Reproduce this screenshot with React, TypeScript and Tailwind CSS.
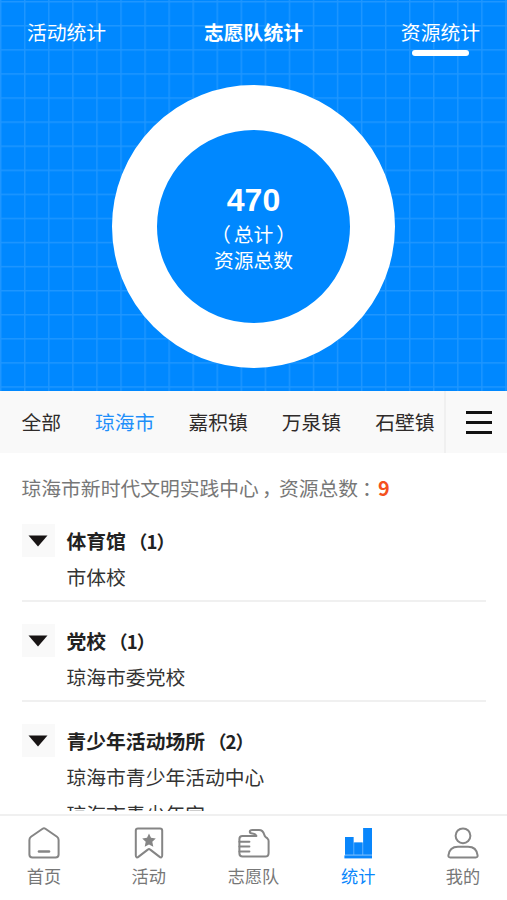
import clsx from "clsx"

type ResourceGroup = {
  name: string
  count: number
  places: string[]
}

const STAT_TABS = [
  { label: "活动统计", bold: false, active: false },
  { label: "志愿队统计", bold: true, active: false },
  { label: "资源统计", bold: false, active: true },
]

const TOWNS = ["全部", "琼海市", "嘉积镇", "万泉镇", "石壁镇"]

const GROUPS: ResourceGroup[] = [
  { name: "体育馆", count: 1, places: ["市体校"] },
  { name: "党校", count: 1, places: ["琼海市委党校"] },
  { name: "青少年活动场所", count: 2, places: ["琼海市青少年活动中心", "琼海市青少年宫"] },
]

function GridBackground() {
  return (
    <svg className="absolute inset-0 size-full" aria-hidden="true">
      <defs>
        <pattern id="grid" x="0" y="1" width="24.06" height="24.08" patternUnits="userSpaceOnUse">
          <path d="M0 0.7H24.1M0.7 0V24.1" stroke="#fff" strokeOpacity="0.12" strokeWidth="1.4" fill="none" />
        </pattern>
      </defs>
      <rect width="100%" height="100%" fill="url(#grid)" />
    </svg>
  )
}

function StatsHeader() {
  return (
    <header className="relative h-[391px] shrink-0 overflow-hidden bg-[#0088ff] text-white">
      <GridBackground />
      <div className="relative flex flex-col">
        <div className="flex h-[85px] items-start justify-between px-[27px] pt-[18px]">
          {STAT_TABS.map((tab) => (
            <div key={tab.label} className="flex flex-col items-center">
              <span className={clsx("leading-[28px]", tab.bold && "font-bold")}>{tab.label}</span>
              {tab.active && <span className="mt-[4px] h-[6px] w-[57px] rounded-full bg-white" />}
            </div>
          ))}
        </div>
        <div className="mx-auto flex size-[283px] flex-col items-center justify-center rounded-full border-[45.5px] border-white bg-[#0088ff]">
          <p className="font-['Liberation_Sans',sans-serif] text-[32px] leading-[36px] font-bold">470</p>
          <p className="mt-[3px] flex gap-[3px] leading-[26px] whitespace-nowrap">
            <span>（</span>
            <span>总计</span>
            <span>）</span>
          </p>
          <p className="leading-[25px]">资源总数</p>
        </div>
      </div>
    </header>
  )
}

function TownBar() {
  return (
    <div className="flex h-[62px] shrink-0 bg-[#f9f9f9]">
      <div className="flex flex-1 items-center gap-[34px] overflow-hidden pl-[21.5px] whitespace-nowrap">
        {TOWNS.map((town) => (
          <span key={town} className={town === "琼海市" ? "text-[#1f8ffa]" : "text-[#2f2b2a]"}>
            {town}
          </span>
        ))}
      </div>
      <button className="flex w-[63px] flex-col items-center justify-center gap-[7px] border-l-2 border-[#f0f0f0] pl-[5px]">
        <span className="h-[3px] w-[26px] bg-[#111]" />
        <span className="h-[3px] w-[26px] bg-[#111]" />
        <span className="h-[3px] w-[26px] bg-[#111]" />
      </button>
    </div>
  )
}

function GroupItem({ group }: { group: ResourceGroup }) {
  return (
    <li className="mb-[22px] flex gap-[12px] border-b-2 border-[#f0f0f0] pb-[6px]">
      <span className="flex size-[33px] shrink-0 items-center justify-center bg-[#f9f9f9]">
        <svg width="20" height="12" viewBox="0 0 20 12">
          <path d="M0.5 0.5H19.5L10 11.5Z" fill="#181414" />
        </svg>
      </span>
      <div className="text-[#333]">
        <p className="flex gap-[3px] leading-[33px] font-bold text-[#222]">
          <span>{group.name}</span>
          <span className="text-[18.6px] tracking-[-1px]">{`（${group.count}）`}</span>
        </p>
        {group.places.map((place) => (
          <p key={place} className="mt-[2px] leading-[35px]">{place}</p>
        ))}
      </div>
    </li>
  )
}

const stroke = { fill: "none", stroke: "#858585", strokeWidth: 2, strokeLinejoin: "round", strokeLinecap: "round" } as const

function HomeIcon() {
  return (
    <svg width="32" height="32" viewBox="0 0 32 32" {...stroke}>
      <path d="M14.6 1.8Q16 0.8 17.4 1.8L29 9.8Q30.6 11 30.6 13V27.5Q30.6 30.6 27.5 30.6H4.5Q1.4 30.6 1.4 27.5V13Q1.4 11 3 9.8Z" />
      <path d="M11 24.5H21" strokeWidth="2.6" />
    </svg>
  )
}

function ActivityIcon() {
  return (
    <svg width="32" height="32" viewBox="0 0 32 32" {...stroke}>
      <path d="M5 1.4H27Q29.2 1.4 29.2 3.6V28.2Q29.2 32 26 29.4L17.2 22.6Q16 21.6 14.8 22.6L6 29.4Q2.8 32 2.8 28.2V3.6Q2.8 1.4 5 1.4Z" />
      <path
        d="M16 6.4L18 10.8L22.8 11.5L19.3 14.8L20.3 19.8L16 17.4L11.7 19.8L12.7 14.8L9.2 11.5L14 10.8Z"
        fill="#858585"
        stroke="none"
      />
    </svg>
  )
}

function VolunteerIcon() {
  return (
    <svg width="32" height="32" viewBox="0 0 32 32" {...stroke}>
      <path d="M18.4 9H4.4Q1.4 9 1.4 12V26.2Q1.4 29.6 4.6 29.6H27.2Q30.6 29.6 30.6 26V14Q30.6 12.4 29.4 11.4L27.6 10Q26.6 9.2 26.2 7.6Q25 3 21 3H14.4Q11.8 3 11.8 4.8Q11.8 6.4 14.4 6.4Q17.4 6.6 18.4 9" />
      <path d="M1.4 14.8H11.4M1.4 19.6H11.4M1.4 24.4H11.4" />
    </svg>
  )
}

function ChartIcon() {
  return (
    <svg width="32" height="32" viewBox="0 0 32 32" fill="#0a86fb">
      <path d="M3 10H11.5V27.4H3ZM12.2 15.4H20.4V27.4H12.2ZM21.2 1H30V27.4H21.2Z" />
      <path d="M2.4 28.4H30V31.4H2.4Z" />
      <path d="M3 10H11.5V28.4H3ZM11.5 15.4H21.2V28.4H11.5ZM21.2 1H30V28.4H21.2Z" fillOpacity="0.55" />
    </svg>
  )
}

function UserIcon() {
  return (
    <svg width="32" height="32" viewBox="0 0 32 32" {...stroke}>
      <circle cx="16" cy="8.8" r="7.4" />
      <path d="M3.2 30.4Q1.2 30.4 1.4 28.4Q2.4 19.8 11 19.8H21Q29.6 19.8 30.6 28.4Q30.8 30.4 28.8 30.4Z" />
    </svg>
  )
}

const NAV_ITEMS = [
  { label: "首页", icon: HomeIcon },
  { label: "活动", icon: ActivityIcon },
  { label: "志愿队", icon: VolunteerIcon },
  { label: "统计", icon: ChartIcon, active: true },
  { label: "我的", icon: UserIcon },
]

function BottomNav() {
  return (
    <nav className="flex h-[86px] shrink-0 justify-between border-t-2 border-[#f0f0f0] bg-white px-[9px] pt-[11px]">
      {NAV_ITEMS.map((item) => {
        const Icon = item.icon

        return (
          <div
            key={item.label}
            className={clsx(
              "flex w-[70px] flex-col items-center text-[17.2px]",
              item.active ? "text-[#0a86fb]" : "text-[#777]",
            )}
          >
            <Icon />
            <span className="mt-[5px] leading-[24px]">{item.label}</span>
          </div>
        )
      })}
    </nav>
  )
}

export default function App() {
  return (
    <div className="flex h-[900px] w-[507px] flex-col overflow-hidden bg-white font-['Noto_Sans_CJK_SC',sans-serif] text-[19.8px]">
      <StatsHeader />
      <TownBar />
      <main className="mb-[3px] min-h-0 flex-1 overflow-hidden px-[21.5px] pt-[19px]">
        <p className="mb-[21px] flex leading-[31px] text-[#777]">
          <span>琼海市新时代文明实践中心</span>
          <span className="w-[20px] pl-[3px]">，</span>
          <span>资源总数</span>
          <span className="w-[20px] pl-[4px]">：</span>
          <span className="font-bold text-[#f4511e]">9</span>
        </p>
        <ul>
          {GROUPS.map((group) => (
            <GroupItem key={group.name} group={group} />
          ))}
        </ul>
      </main>
      <BottomNav />
    </div>
  )
}
